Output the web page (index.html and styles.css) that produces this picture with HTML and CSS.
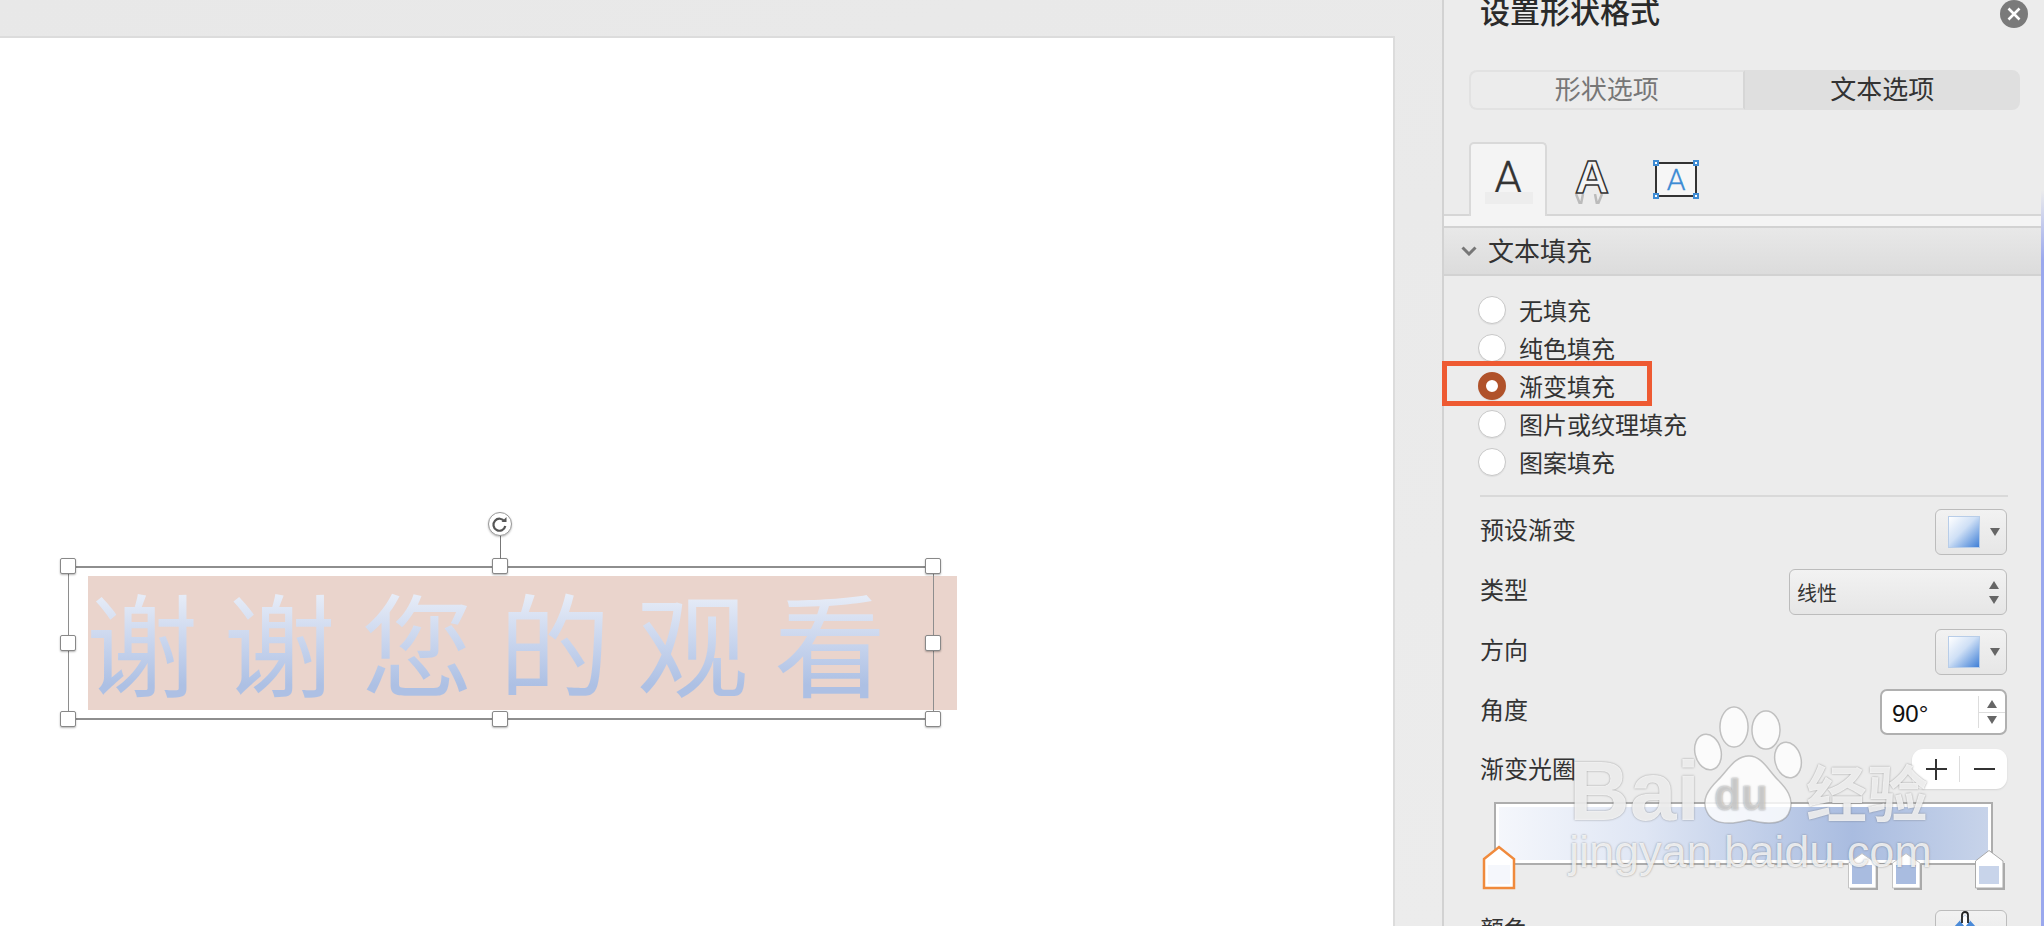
FILE: index.html
```html
<!DOCTYPE html>
<html>
	<head>
		<meta charset="UTF-8">
		<title>设置形状格式</title>
		<link rel="stylesheet" href="styles.css">
	</head>
	<body>
		<div class="app">
			<div class="workspace">
				<div class="slide">
					<div class="selection">
						<div class="textFill"><span class="gradText">谢谢您的观看</span></div>
						<i class="handle h1"></i><i class="handle h2"></i><i class="handle h3"></i>
						<i class="handle h4"></i><i class="handle h5"></i>
						<i class="handle h6"></i><i class="handle h7"></i><i class="handle h8"></i>
						<i class="stem"></i>
						<div class="rotate">
							<svg width="24" height="24" viewBox="0 0 24 24"><path d="M16.500 9.500a6 6 0 1 0 .8 4.500" fill="none" stroke="#555" stroke-width="2.200"/><path d="M13.500 10h5V5z" fill="#555"/></svg>
						</div>
					</div>
				</div>
			</div>
			<div class="panel">
				<div class="titleRow">
					<div class="title">设置形状格式</div>
					<div class="close">
						<svg width="14" height="14" viewBox="0 0 14 14"><path d="M1.500 1.500l11 11M12.500 1.500l-11 11" stroke="#fff" stroke-width="2.600"/></svg>
					</div>
				</div>
				<div class="segment">
					<div class="segItem">形状选项</div>
					<div class="segItem active">文本选项</div>
				</div>
				<div class="tabs">
					<div class="tab active">
						<span class="bigA">A</span>
						<i class="tabShade"></i>
					</div>
					<div class="tab">
						<span class="bigA outlineA">A</span>
						<svg class="reflect" width="34" height="10" viewBox="0 0 34 10"><path d="M4 0l4 10M11 0l-2 10M23 0l2 10M30 0l-4 10" stroke="#bbb" stroke-width="2.500" fill="none"/></svg>
					</div>
					<div class="tab">
						<div class="boxIcon">
							<span class="boxA">A</span>
							<i class="dot d1"></i><i class="dot d2"></i><i class="dot d3"></i><i class="dot d4"></i>
						</div>
					</div>
				</div>
				<div class="band"></div>
				<div class="sectionHead">
					<svg width="16" height="10" viewBox="0 0 16 10"><path d="M1.500 1.500L8 8l6.500-6.500" fill="none" stroke="#777" stroke-width="3"/></svg>
					<span>文本填充</span>
				</div>
				<div class="radios">
					<div class="radioRow"><i class="radio"></i>无填充</div>
					<div class="radioRow"><i class="radio"></i>纯色填充</div>
					<div class="radioRow"><i class="radio on"></i>渐变填充</div>
					<div class="radioRow"><i class="radio"></i>图片或纹理填充</div>
					<div class="radioRow"><i class="radio"></i>图案填充</div>
					<div class="mark"></div>
				</div>
				<div class="divider"></div>
				<div class="rows">
					<div class="row">
						<span>预设渐变</span>
						<div class="swatchBtn"><i class="swatch"></i><i class="caret"></i></div>
					</div>
					<div class="row">
						<span>类型</span>
						<div class="select">线性<div class="updown"><i class="up"></i><i class="caret"></i></div></div>
					</div>
					<div class="row">
						<span>方向</span>
						<div class="swatchBtn"><i class="swatch"></i><i class="caret"></i></div>
					</div>
					<div class="row">
						<span>角度</span>
						<div class="spin">
							<div class="spinVal">90°</div>
							<div class="spinBtns">
								<div class="spinBtn"><i class="up"></i></div>
								<div class="spinBtn"><i class="caret"></i></div>
							</div>
						</div>
					</div>
					<div class="row rowPm">
						<span>渐变光圈</span>
						<div class="plusMinus">
							<div class="pmBtn"><i class="plus"></i></div>
							<div class="pmBtn"><i class="minus"></i></div>
						</div>
					</div>
				</div>
				<div class="stops">
					<div class="gradBar"></div>
					<svg class="stop s1" width="34" height="45" viewBox="0 0 34 45"><path d="M2 14L17 2l15 12v29H2z" fill="#fff" stroke="#f08a3c" stroke-width="2.500"/><rect x="6" y="20" width="22" height="19" fill="#f5f7fc"/></svg>
					<svg class="stop s2" width="32" height="38" viewBox="0 0 32 38"><path d="M1.500 11L15 1.500 29 11v25H1.500z" fill="#fff" stroke="#c4c4c4"/><path d="M30 12v25H3" fill="none" stroke="#aaa" stroke-width="2"/><rect x="5" y="13" width="20" height="19" fill="#a9bce0"/></svg>
					<svg class="stop s3" width="32" height="38" viewBox="0 0 32 38"><path d="M1.500 11L15 1.500 29 11v25H1.500z" fill="#fff" stroke="#c4c4c4"/><path d="M30 12v25H3" fill="none" stroke="#aaa" stroke-width="2"/><rect x="5" y="13" width="20" height="19" fill="#a9bce0"/></svg>
					<svg class="stop s4" width="32" height="41" viewBox="0 0 32 41"><path d="M1.500 12L15 1.500 29 12v27H1.500z" fill="#fff" stroke="#aaa"/><path d="M30 14v26H3" fill="none" stroke="#aaa" stroke-width="2"/><rect x="5" y="17" width="20" height="18" fill="#c8d4ea"/></svg>
				</div>
				<div class="row rowColor">
					<span>颜色</span>
					<div class="swatchBtn">
						<svg class="bucket" width="34" height="20" viewBox="0 0 34 20"><path d="M17 4L5 17l12 12 12-12z" fill="#4a8ad8"/><path d="M17 4l-5 6 5 6 5-6z" fill="#fff"/><path d="M14 12V4a3 3 0 0 1 6 0v8" fill="none" stroke="#222" stroke-width="1.800"/></svg>
					</div>
				</div>
				<div class="edge"></div>
			</div>
			<div class="watermark">
				<svg class="paw" width="120" height="130" viewBox="1690 700 120 130">
					<ellipse cx="1734" cy="727" rx="14" ry="20"/>
					<ellipse cx="1766" cy="730" rx="14" ry="19"/>
					<ellipse cx="1708" cy="752" rx="13" ry="18" transform="rotate(-14 1708 752)"/>
					<ellipse cx="1788" cy="760" rx="13" ry="18" transform="rotate(-14 1788 760)"/>
					<path d="M1749 756C1735 756 1728 770 1718 780C1708 790 1701 800 1707 812C1713 825 1730 825 1749 820C1768 825 1786 825 1790 810C1794 798 1786 788 1778 780C1768 770 1762 756 1749 756Z"/>
				</svg>
				<span class="wmBai">Bai</span>
				<span class="wmDu">du</span>
				<span class="wmCn">经验</span>
				<span class="wmUrl">jingyan.baidu.com</span>
			</div>
		</div>
	</body>
</html>
```

FILE: styles.css
```css
*{
	margin: 0;
	padding: 0;
	box-sizing: border-box;
}
i{
	display: block;
}
body{
	font-family: "Noto Sans CJK SC", "Liberation Sans", sans-serif;
	color: #333;
	overflow: hidden;
}
.app{
	display: flex;
	width: 2044px;
	height: 926px;
	position: relative;
	overflow: hidden;
	background: #ebebeb;
}
.workspace{
	width: 1442px;
	height: 926px;
	padding-top: 36px;
	background: linear-gradient(160deg, #e8e8e8, #ececec);
}
.slide{
	width: 1395px;
	height: 890px;
	background: #fff;
	border-top: 2px solid #dcdcdc;
	border-right: 2px solid #dcdcdc;
	position: relative;
	z-index: 0;
}
.selection{
	position: absolute;
	left: 68px;
	top: 528px;
	width: 866px;
	height: 154px;
	border: 2px solid #8e8e8e;
	border-left-width: 1px;
	border-right-width: 1px;
}
.textFill{
	position: absolute;
	z-index: -1;
	left: 19px;
	top: 8px;
	width: 869px;
	height: 134px;
	background: #ead4cc;
	font-size: 112px;
	line-height: 128px;
	letter-spacing: 25.6px;
	text-indent: -1px;
	white-space: nowrap;
}
.gradText{
	display: inline-block;
	height: 128px;
	background: linear-gradient(#e9eef8 12%, #adc0e4 85%);
	-webkit-background-clip: text;
	background-clip: text;
	color: transparent;
}
.handle{
	position: absolute;
	width: 16px;
	height: 16px;
	background: #fff;
	border: 1px solid #888;
	border-radius: 2px;
	box-shadow: 0 1px 2px rgba(0,0,0,.3);
}
.h1{left: -9px; top: -10px;}
.h2{left: 423px; top: -10px;}
.h3{left: 856px; top: -10px;}
.h4{left: -9px; top: 67px;}
.h5{left: 856px; top: 67px;}
.h6{left: -9px; top: 143px;}
.h7{left: 423px; top: 143px;}
.h8{left: 856px; top: 143px;}
.stem{
	position: absolute;
	left: 431px;
	top: -33px;
	width: 1px;
	height: 24px;
	background: #777;
}
.rotate{
	position: absolute;
	left: 419px;
	top: -56px;
	width: 24px;
	height: 24px;
	background: #fff;
	border: 1px solid #999;
	border-radius: 50%;
	box-shadow: 0 1px 2px rgba(0,0,0,.25);
}
.rotate svg{
	display: block;
	margin: -1px;
}
.panel{
	width: 602px;
	height: 926px;
	background: #ececec;
	border-left: 2px solid #d2d2d2;
	position: relative;
}
.titleRow{
	height: 70px;
	display: flex;
	justify-content: space-between;
	padding: 0 16px 0 36px;
}
.title{
	font-size: 30px;
	line-height: 26px;
	margin-top: -3px;
	font-weight: 500;
	color: #2a2a2a;
}
.close{
	width: 28px;
	height: 28px;
	border-radius: 50%;
	background: #7a7a7a;
	display: flex;
	align-items: center;
	justify-content: center;
}
.segment{
	display: flex;
	height: 40px;
	margin: 0 24px 0 25px;
	font-size: 26px;
	line-height: 31px;
	text-align: center;
}
.segItem{
	flex: 1;
	color: #777;
	border: 2px solid #e2e2e2;
	border-right: 2px solid #d6d6d6;
	border-radius: 8px 0 0 8px;
}
.segItem.active{
	color: #333;
	background: #dfdfdf;
	border-color: #dfdfdf;
	border-radius: 0 8px 8px 0;
}
.tabs{
	display: flex;
	height: 74px;
	margin-top: 32px;
	margin-right: 3px;
	padding-left: 25px;
	border-bottom: 2px solid #d6d6d6;
}
.tab{
	width: 78px;
	height: 74px;
	position: relative;
	display: flex;
	justify-content: center;
	flex: none;
}
.tab.active{
	background: #f4f4f4;
	border: 2px solid #d9d9d9;
	border-bottom: 0;
	border-radius: 5px 5px 0 0;
}
.bigA{
	font-family: Roboto, "Liberation Sans", sans-serif;
	font-weight: 300;
	font-size: 45px;
	line-height: 52px;
	color: #333;
	margin-top: 8px;
	-webkit-text-stroke: .3px #333;
}
.tabShade{
	position: absolute;
	left: 14px;
	top: 48px;
	width: 48px;
	height: 12px;
	background: #ededed;
}
.outlineA{
	font-family: "Liberation Sans", sans-serif;
	font-weight: 700;
	font-size: 47px;
	line-height: 52px;
	color: #f4f4f4;
	-webkit-text-stroke: 1.5px #333;
	margin-top: 9px;
	margin-left: 12px;
}
.reflect{
	position: absolute;
	left: 25px;
	top: 52px;
}
.boxIcon{
	width: 42px;
	height: 35px;
	margin-top: 20px;
	margin-left: 24px;
	flex: none;
	border: 2px solid #333;
	background: #f6f6f6;
	position: relative;
	text-align: center;
}
.boxA{
	font-family: Roboto, "Liberation Sans", sans-serif;
	font-size: 30px;
	font-weight: 300;
	line-height: 31px;
	color: #3d8bd4;
	-webkit-text-stroke: .3px #3d8bd4;
}
.dot{
	position: absolute;
	width: 6px;
	height: 6px;
	background: #fff;
	border: 2px solid #3d8bd4;
}
.d1{left: -4px; top: -4px;}
.d2{right: -4px; top: -4px;}
.d3{left: -4px; bottom: -4px;}
.d4{right: -4px; bottom: -4px;}
.band{
	height: 10px;
	margin-right: 3px;
	background: #f4f4f4;
}
.sectionHead{
	height: 50px;
	margin-right: 3px;
	display: flex;
	align-items: center;
	gap: 11px;
	padding-left: 17px;
	background: linear-gradient(#e8e8e8, #dcdcdc);
	border-top: 2px solid #d2d2d2;
	border-bottom: 2px solid #d2d2d2;
	font-size: 26px;
}
.sectionHead span{
	margin-bottom: 4px;
}
.radios{
	padding: 15px 0 0 34px;
	position: relative;
}
.radioRow{
	height: 38px;
	display: flex;
	align-items: center;
	gap: 13px;
	font-size: 24px;
	line-height: 38px;
}
.radio{
	width: 28px;
	height: 28px;
	border-radius: 50%;
	background: #fff;
	border: 1px solid #c8c8c8;
	box-shadow: 0 1px 1px rgba(0,0,0,.06);
}
.radio.on{
	border: 8px solid #b0522a;
	background: #fff;
}
.mark{
	position: absolute;
	left: -2px;
	top: 85px;
	width: 210px;
	height: 45px;
	border: 5px solid #ee5a32;
}
.divider{
	height: 2px;
	margin: 14px 36px 0 36px;
	background: #d9d9d9;
}
.rows{
	display: flex;
	flex-direction: column;
	gap: 14px;
	margin-top: 12px;
	padding: 0 37px 0 36px;
}
.row{
	height: 46px;
	display: flex;
	justify-content: space-between;
	align-items: center;
	font-size: 24px;
}
.row span{
	margin-bottom: 8px;
}
.rows .rowPm{
	height: 40px;
}
.rows .rowPm span{
	margin-bottom: 3px;
}
.rowColor{
	padding: 0 37px 0 36px;
	align-items: flex-start;
}
.rowColor span{
	margin-bottom: 0;
	line-height: 36px;
}
.swatchBtn{
	width: 72px;
	height: 46px;
	flex: none;
	display: flex;
	align-items: center;
	gap: 10px;
	padding-left: 12px;
	background: linear-gradient(#f2f2f2, #e6e6e6);
	border: 1px solid #bcbcbc;
	border-radius: 6px;
	position: relative;
}
.swatch{
	width: 32px;
	height: 32px;
	background: linear-gradient(135deg, #fff 0%, #cfe0f6 45%, #3f7fd6 100%);
	border: 1px solid #b8cde8;
}
.caret{
	width: 0;
	height: 0;
	border-left: 5px solid transparent;
	border-right: 5px solid transparent;
	border-top: 8px solid #666;
}
.up{
	width: 0;
	height: 0;
	border-left: 5px solid transparent;
	border-right: 5px solid transparent;
	border-bottom: 8px solid #666;
}
.select{
	width: 218px;
	height: 46px;
	display: flex;
	justify-content: space-between;
	align-items: center;
	padding: 0 7px;
	font-size: 20px;
	background: linear-gradient(#f2f2f2, #e6e6e6);
	border: 1px solid #bcbcbc;
	border-radius: 6px;
}
.updown{
	display: flex;
	flex-direction: column;
	gap: 7px;
}
.spin{
	width: 127px;
	height: 46px;
	display: flex;
	background: #fff;
	border: 2px solid #b0b0b0;
	border-radius: 7px;
}
.spinVal{
	flex: 1;
	padding-left: 10px;
	font-family: "Liberation Sans", sans-serif;
	font-size: 24px;
	line-height: 46px;
	color: #111;
}
.spinBtns{
	width: 27px;
	margin: 5px 0;
	border-left: 1px solid #ddd;
	display: flex;
	flex-direction: column;
}
.spinBtn{
	flex: 1;
	display: flex;
	align-items: center;
	justify-content: center;
}
.spinBtn:first-child{
	border-bottom: 1px solid #ddd;
}
.plusMinus{
	width: 95px;
	height: 40px;
	display: flex;
	align-items: center;
	background: #fff;
	border-radius: 11px;
	box-shadow: 0 1px 2px rgba(0,0,0,.1);
}
.pmBtn{
	flex: 1;
	height: 26px;
	position: relative;
}
.pmBtn:first-child{
	border-right: 1px solid #ddd;
}
.plus,.minus{
	position: absolute;
	left: 14px;
	top: 12px;
	width: 21px;
	height: 2px;
	background: #333;
}
.plus::after{
	content: "";
	position: absolute;
	left: 9px;
	top: -9px;
	width: 2px;
	height: 21px;
	background: #333;
}
.stops{
	height: 108px;
	margin-top: 13px;
	position: relative;
}
.gradBar{
	position: absolute;
	left: 50px;
	top: 0;
	width: 499px;
	height: 63px;
	border: 2px solid #adadad;
	outline: 3px solid #fff;
	outline-offset: -5px;
	background: linear-gradient(90deg, #f5f7fc 0%, #dfe6f4 30%, #a9bce0 72%, #c8d4ea 100%);
}
.stop{
	position: absolute;
	display: block;
}
.s1{left: 38px; top: 43px;}
.s2{left: 403px; top: 50px;}
.s3{left: 447px; top: 50px;}
.s4{left: 530px; top: 47px;}
.bucket{
	position: absolute;
	left: 12px;
	top: 0;
	overflow: hidden;
}
.edge{
	position: absolute;
	right: 0;
	top: 0;
	width: 3px;
	height: 926px;
	background: linear-gradient(#ececec 0, #ececec 190px, #9aa8ee 260px);
}
.watermark{
	position: absolute;
	left: 0;
	top: 0;
	width: 2044px;
	height: 926px;
	pointer-events: none;
}
.watermark span{
	position: absolute;
	white-space: nowrap;
	color: rgba(255,255,255,.82);
	text-shadow: 0 0 2px rgba(80,80,80,.6);
	font-family: "Liberation Sans", sans-serif;
}
.paw{
	position: absolute;
	left: 1690px;
	top: 700px;
	fill: rgba(255,255,255,.8);
	stroke: rgba(130,130,130,.45);
	stroke-width: 1.5;
}
.watermark .wmBai{
	left: 1569px;
	top: 745px;
	font-size: 84px;
	line-height: 92px;
	font-weight: 700;
}
.watermark .wmDu{
	left: 1714px;
	top: 770px;
	font-size: 44px;
	line-height: 50px;
	color: rgba(235,235,235,.6);
	font-weight: 700;
}
.watermark .wmCn{
	left: 1806px;
	top: 748px;
	font-family: "Noto Sans CJK SC", sans-serif;
	font-size: 61px;
	line-height: 86px;
	font-weight: 700;
}
.watermark .wmUrl{
	left: 1569px;
	top: 826px;
	font-size: 45px;
	line-height: 52px;
}
```
